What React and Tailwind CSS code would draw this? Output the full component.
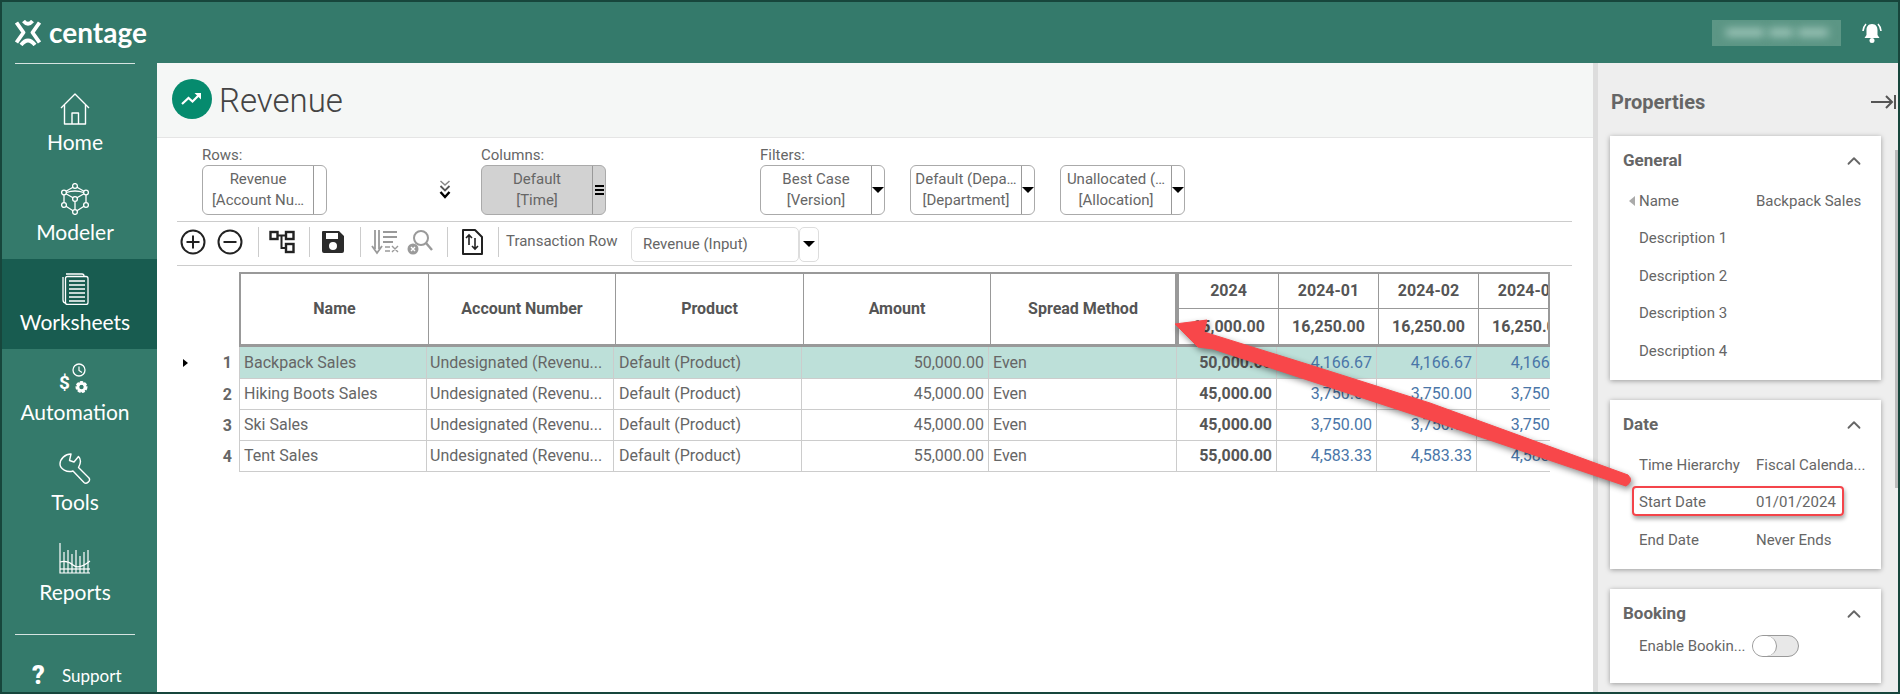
import { ChevronUp } from 'lucide-react';

const navItems = [
    { label: 'Home', icon: <HomeIcon /> },
    { label: 'Modeler', icon: <ModelerIcon /> },
    { label: 'Worksheets', icon: <WorksheetIcon />, active: true },
    { label: 'Automation', icon: <AutomationIcon /> },
    { label: 'Tools', icon: <ToolsIcon /> },
    { label: 'Reports', icon: <ReportsIcon /> },
];

const rows = [
    { name: 'Backpack Sales', amount: '50,000.00', month: '4,166.67' },
    { name: 'Hiking Boots Sales', amount: '45,000.00', month: '3,750.00' },
    { name: 'Ski Sales', amount: '45,000.00', month: '3,750.00' },
    { name: 'Tent Sales', amount: '55,000.00', month: '4,583.33' },
];

function LogoIcon() {
    return (
        <svg width="26" height="26" viewBox="0 0 26 26" fill="none" stroke="white" strokeWidth="3.8">
            <path d="M1.5 2.5 L8.5 12.5 L1.5 22.5" strokeLinejoin="round" />
            <path d="M24.5 2.5 L17.5 12.5 L24.5 22.5" strokeLinejoin="round" />
            <path d="M8.5 1 Q13 6.5 17.5 1" />
            <path d="M6 25 Q13 16 20 25" />
        </svg>
    );
}

function HomeIcon() {
    return (
        <svg width="30" height="32" viewBox="0 0 30 32" fill="none" stroke="white" strokeWidth="1.4" strokeLinejoin="round">
            <path d="M1 15 L15 1 L29 15" />
            <path d="M4.5 12 V31 H25.5 V12" />
            <path d="M12 31 V20 H18.5 V31" />
        </svg>
    );
}

function ModelerIcon() {
    return (
        <svg width="30" height="32" viewBox="0 0 30 32" fill="none" stroke="white" strokeWidth="1.3">
            <circle cx="15" cy="3" r="2.4" />
            <circle cx="4" cy="9.5" r="2.4" />
            <circle cx="26" cy="9.5" r="2.4" />
            <circle cx="15" cy="16" r="2.4" />
            <circle cx="4" cy="22" r="2.4" />
            <circle cx="26" cy="22" r="2.4" />
            <circle cx="15" cy="29" r="2.4" />
            <path d="M13 4.2 L6 8.3 M17 4.2 L24 8.3 M4 12 V19.5 M26 12 V19.5 M6 23.3 L13 27.8 M24 23.3 L17 27.8 M15 18.4 V26.6 M6 10.8 L13 14.7 M24 10.8 L17 14.7 M6.4 9.5 Q15 6.5 23.6 9.5" />
        </svg>
    );
}

function WorksheetIcon() {
    return (
        <svg width="28" height="32" viewBox="0 0 28 32" fill="none" stroke="white" strokeWidth="1.3">
            <path d="M5 1 H21 Q23 1 23 3" />
            <path d="M2 4 V27 Q2 30 5 30" />
            <rect x="4.5" y="3.5" width="22.5" height="28" rx="2" />
            <path d="M8 8 H24 M8 12 H24 M8 16 H24 M8 20 H24 M8 24 H24 M8 28 H24" />
        </svg>
    );
}

function AutomationIcon() {
    return (
        <svg width="32" height="32" viewBox="0 0 32 32" fill="none" stroke="white">
            <circle cx="20" cy="7" r="6" strokeWidth="1.3" />
            <path d="M20 3.5 V7.5 L23 9.5" strokeWidth="1.2" />
            <text x="0" y="26" fill="white" stroke="none" fontSize="19" fontWeight="700" fontFamily="Roboto, sans-serif">$</text>
            <circle cx="22.5" cy="24" r="4.2" strokeWidth="3.6" strokeDasharray="2.6 1" />
            <circle cx="22.5" cy="24" r="3.6" strokeWidth="2.6" />
        </svg>
    );
}

function ToolsIcon() {
    return (
        <svg width="32" height="32" viewBox="0 0 32 32" fill="none" stroke="white" strokeWidth="1.4" strokeLinejoin="round">
            <path d="M12 1 C6 1 1 6 1 11 C1 16 8 20 14 18 L25 29.5 C27.5 31.5 32 28 30 25 L19.5 14.5 C22 10 22 6 19.5 3.5 L15 9 L10.5 7.5 Z" />
        </svg>
    );
}

function ReportsIcon() {
    return (
        <svg width="32" height="32" viewBox="0 0 32 32" fill="none" stroke="white" strokeWidth="1.2">
            <path d="M1 0 V30 H31" />
            <path d="M5 9 V30 M9 7 V30 M13 11 V30 M17 7 V30 M21 13 V30 M25 9 V30 M29 7 V30" />
            <path d="M1 19 Q8 17 14 22 T31 18" />
            <path d="M1 26 H31" />
        </svg>
    );
}

function NavItem({ label, icon, active }) {
    return (
        <div className={`h-[90px] flex flex-col items-center pt-[14px] pr-[9px] ${active ? 'bg-[#185c50]' : ''}`}>
            <div className="h-[32px] flex items-center justify-center">{icon}</div>
            <div className="mt-[2px] text-[21px] leading-[30px] text-white font-['Lato',sans-serif]">{label}</div>
        </div>
    );
}

function Sidebar() {
    return (
        <aside className="w-[155px] shrink-0 flex flex-col">
            <div className="mx-[13px] mr-[22px] border-t border-white/80 h-[16px]"></div>
            {navItems.map((item) => (
                <NavItem key={item.label} {...item} />
            ))}
            <div className="mx-[13px] mr-[22px] mt-[15px] border-t border-white/80"></div>
            <div className="flex items-center mt-[28px] pl-[30px]">
                <span className="text-[25px] leading-[24px] font-black text-white w-[30px] font-['Roboto',sans-serif]">?</span>
                <span className="text-[17px] text-white font-['Lato',sans-serif]">Support</span>
            </div>
        </aside>
    );
}

function Caret({ className = '' }) {
    return <span className={`block w-0 h-0 border-x-[6px] border-x-transparent border-t-[6px] border-t-black ${className}`}></span>;
}

function FieldChip({ top, bottom, active, menu, className = '' }) {
    return (
        <div className={`w-[125px] h-[50px] flex rounded-[6px] border border-[#aaa] text-[15px] leading-[21px] text-[#666] ${active ? 'bg-[#d2d2d2]' : 'bg-white'} ${className}`}>
            <div className="flex-1 min-w-0 text-center pt-[3px] whitespace-nowrap overflow-hidden">
                <div>{top}</div>
                <div>{bottom}</div>
            </div>
            <div className="w-[13px] border-l border-[#999] flex items-center justify-center">
                {menu === 'lines' && (
                    <span className="flex flex-col gap-[2px]">
                        <span className="block w-[9px] h-[2px] bg-black"></span>
                        <span className="block w-[9px] h-[2px] bg-black"></span>
                        <span className="block w-[9px] h-[2px] bg-black"></span>
                    </span>
                )}
                {menu === 'caret' && <Caret />}
            </div>
        </div>
    );
}

function ToolSep() {
    return <div className="w-px h-[30px] bg-[#ccc]"></div>;
}

function Toolbar() {
    return (
        <div className="h-[44px] border-b border-[#ccc] flex items-center pl-[3px] pb-[4px]">
            <svg width="26" height="26" viewBox="0 0 26 26" fill="none" stroke="#222" strokeWidth="2">
                <circle cx="13" cy="13" r="11.5" />
                <path d="M6.5 13 H19.5 M13 6.5 V19.5" />
            </svg>
            <svg width="26" height="26" viewBox="0 0 26 26" fill="none" stroke="#222" strokeWidth="2" className="ml-[11px]">
                <circle cx="13" cy="13" r="11.5" />
                <path d="M6.5 13 H19.5" />
            </svg>
            <div className="ml-[15px]"><ToolSep /></div>
            <svg width="26" height="24" viewBox="0 0 26 24" fill="none" stroke="#222" strokeWidth="2.4" className="ml-[10px]">
                <rect x="1.5" y="2" width="7" height="7" />
                <rect x="17" y="2" width="7.5" height="7" />
                <rect x="17" y="14" width="7.5" height="8" />
                <path d="M8.5 5.5 H17 M12.5 5.5 V18 H17" strokeWidth="2" />
            </svg>
            <div className="ml-[14px]"><ToolSep /></div>
            <svg width="24" height="24" viewBox="0 0 24 24" className="ml-[11px]">
                <path fill="#2b2b2b" fillRule="evenodd" d="M2 1 H18 L23 6 V21 Q23 23 21 23 H3 Q1 23 1 21 V2 Q1 1 2 1 Z M5 3 V9 H17 V3 Z M12 12 A4 4 0 1 0 12 20 A4 4 0 1 0 12 12 Z" />
            </svg>
            <div className="ml-[15px]"><ToolSep /></div>
            <svg width="28" height="26" viewBox="0 0 28 26" fill="none" stroke="#9a9a9a" strokeWidth="1.8" className="ml-[10px]">
                <path d="M4 1 V20 M8 1 V20 M1 17 L6 24 L11 17" />
                <path d="M12 3 H26 M12 8 H26 M12 13 H22" strokeWidth="2" />
                <path d="M14 18 H19 M14 22 H19 M21 17 L27 23 M27 17 L21 23" strokeWidth="1.4" />
            </svg>
            <svg width="26" height="26" viewBox="0 0 26 26" fill="none" className="ml-[8px]">
                <circle cx="14" cy="9" r="7" stroke="#9a9a9a" strokeWidth="2" />
                <path d="M19 14 L25 21" stroke="#9a9a9a" strokeWidth="2.4" />
                <circle cx="6" cy="20" r="5.5" fill="#9a9a9a" />
                <path d="M4 18 L8 22 M8 18 L4 22" stroke="white" strokeWidth="1.4" />
            </svg>
            <div className="ml-[14px]"><ToolSep /></div>
            <svg width="22" height="26" viewBox="0 0 22 26" fill="none" className="ml-[13px]">
                <path d="M2 1 H14 L21 8 V25 H2 Z" stroke="#222" strokeWidth="2" strokeLinejoin="round" />
                <path d="M8 16 V6 M5 9 L8 6 L11 9 M14 9 V20 M11 17 L14 20 L17 17" stroke="#222" strokeWidth="1.6" />
            </svg>
            <div className="ml-[15px]"><ToolSep /></div>
            <span className="ml-[7px] w-[125px] text-[15px] text-[#666] whitespace-nowrap">Transaction Row</span>
            <div className="w-[168px] h-[35px] mt-[5px] flex items-center pl-[11px] rounded-[5px] border border-[#ddd] text-[15px] text-[#666]">Revenue (Input)</div>
            <div className="w-[20px] h-[35px] mt-[5px] flex items-center justify-center rounded-[5px] border border-[#ddd]">
                <Caret />
            </div>
        </div>
    );
}

function GridHeader() {
    const nameCols = [
        ['Name', 'w-[188px]'],
        ['Account Number', 'w-[187px]'],
        ['Product', 'w-[188px]'],
        ['Amount', 'w-[187px]'],
        ['Spread Method', 'flex-1'],
    ];
    const timeCols = [
        ['2024', '65,000.00'],
        ['2024-01', '16,250.00'],
        ['2024-02', '16,250.00'],
        ['2024-03', '16,250.00'],
    ];
    return (
        <div className="flex h-[75px] ml-[62px] text-[16px] font-bold text-[#555]">
            <div className="w-[938px] shrink-0 flex border-2 border-b-[3px] border-[#999]">
                {nameCols.map(([label, width], i) => (
                    <div key={label} className={`${width} flex items-center justify-center ${i < 4 ? 'border-r border-[#999]' : ''}`}>{label}</div>
                ))}
            </div>
            <div className="flex-1 min-w-0 flex overflow-hidden border-y-2 border-b-[3px] border-r-2 border-l-2 border-[#999]">
                {timeCols.map(([year, total]) => (
                    <div key={year} className="w-[100px] shrink-0 flex flex-col border-r border-[#999]">
                        <div className="h-[35px] flex items-center justify-center border-b border-[#999]">{year}</div>
                        <div className="flex-1 flex items-center justify-center whitespace-nowrap">{total}</div>
                    </div>
                ))}
            </div>
        </div>
    );
}

function GridRow({ row, index }) {
    const selected = index === 0;
    return (
        <div className={`flex items-stretch ${index === 0 ? 'h-[32px]' : 'h-[31px]'}`}>
            <div className="w-[62px] shrink-0 flex items-center pl-[6px] pr-[7px]">
                {selected && <span className="block w-0 h-0 border-y-[4px] border-y-transparent border-l-[5px] border-l-black"></span>}
                <span className="ml-auto text-[16px] font-bold text-[#666]">{index + 1}</span>
            </div>
            <div className={`flex-1 min-w-0 flex overflow-hidden border-b border-[#ccc] text-[16px] text-[#666] ${selected ? 'bg-[#bde0d9]' : ''}`}>
                <div className="w-[188px] shrink-0 pl-[4px] flex items-center border-x border-[#ccc]">{row.name}</div>
                <div className="w-[187px] shrink-0 pl-[3px] flex items-center border-r border-[#ccc] whitespace-nowrap">Undesignated (Revenu...</div>
                <div className="w-[188px] shrink-0 pl-[5px] flex items-center border-r border-[#ccc]">Default (Product)</div>
                <div className="w-[187px] shrink-0 pr-[4px] flex items-center justify-end border-r border-[#ccc]">{row.amount}</div>
                <div className="w-[188px] shrink-0 pl-[4px] flex items-center border-r border-[#ccc]">Even</div>
                <div className="w-[100px] shrink-0 pr-[4px] flex items-center justify-end border-r border-[#ccc] font-bold text-[#555]">{row.amount}</div>
                {[0, 1, 2].map((i) => (
                    <div key={i} className="w-[100px] shrink-0 pr-[4px] flex items-center justify-end border-r border-[#ccc] text-[#4a76a8]">{row.month}</div>
                ))}
            </div>
        </div>
    );
}

function PropRow({ label, value, marker }) {
    return (
        <div className="relative h-[37.5px] flex items-center pl-[29px] text-[15px] text-[#666]">
            {marker && <span className="absolute left-[19px] w-0 h-0 border-y-[5px] border-y-transparent border-r-[6px] border-r-[#aaa]"></span>}
            <span className="w-[117px] shrink-0 whitespace-nowrap">{label}</span>
            <span className="whitespace-nowrap">{value}</span>
        </div>
    );
}

function PropCard({ title, className = '', children }) {
    return (
        <section className={`bg-white shadow-[0_1px_5px_rgba(0,0,0,0.35)] ${className}`}>
            <div className="h-[46px] pt-[4px] pl-[13px] pr-[16px] flex items-center justify-between">
                <h3 className="text-[17px] font-bold text-[#666]">{title}</h3>
                <ChevronUp size={22} strokeWidth={2} color="#666" />
            </div>
            {children}
        </section>
    );
}

function PropertiesPanel() {
    return (
        <aside className="w-[300px] shrink-0 bg-[#eeeeee] relative flex flex-col pl-[12px] overflow-hidden">
            <div className="h-[73px] flex items-center justify-between pr-[2px]">
                <h2 className="ml-px mt-[5px] text-[20px] font-bold text-[#666]">Properties</h2>
                <svg width="26" height="14" viewBox="0 0 26 14" fill="none" stroke="#555" strokeWidth="2" className="mt-[5px]">
                    <path d="M1 7 H22 M16 1 L22 7 L16 13 M25 0 V14" />
                </svg>
            </div>
            <div className="w-[271px] flex flex-col gap-[20px]">
                <PropCard title="General" className="h-[244px]">
                    <PropRow label="Name" value="Backpack Sales" marker />
                    <PropRow label="Description 1" />
                    <PropRow label="Description 2" />
                    <PropRow label="Description 3" />
                    <PropRow label="Description 4" />
                </PropCard>
                <PropCard title="Date" className="h-[169px]">
                    <PropRow label="Time Hierarchy" value="Fiscal Calenda..." />
                    <PropRow label="Start Date" value="01/01/2024" />
                    <PropRow label="End Date" value="Never Ends" />
                </PropCard>
                <PropCard title="Booking" className="h-[94px]">
                    <div className="flex items-center pl-[29px] text-[15px] text-[#666]">
                        <span className="w-[113px] whitespace-nowrap">Enable Bookin...</span>
                        <span className="flex w-[47px] h-[22px] rounded-full border border-[#999] bg-[#e8e8e8]">
                            <span className="w-[24px] h-[20px] rounded-full border-r border-[#999] bg-white"></span>
                        </span>
                    </div>
                </PropCard>
            </div>
            {/* scrollbar */}
            <div className="absolute right-0 top-[87px] w-[3px] h-[338px] bg-[#bbb]"></div>
        </aside>
    );
}

function Annotation() {
    return (
        <>
            <svg width="1900" height="694" viewBox="0 0 1900 694" className="absolute left-[-2px] top-[-2px] pointer-events-none drop-shadow-[2px_3px_3px_rgba(0,0,0,0.45)]">
                <path d="M1175 324 L1207 320 L1204 332 L1310 365 L1430 403 L1628 475 Q1634 481 1626 486 L1430 420 L1277 370 L1213 349 L1198 347 Z" fill="#f8474a" stroke="#f8474a" strokeWidth="1" strokeLinejoin="round" />
            </svg>
            <div className="absolute left-[1630px] top-[484px] w-[212px] h-[30px] rounded-[4px] border-2 border-[#f4444a] shadow-[1px_3px_4px_rgba(0,0,0,0.35)]"></div>
        </>
    );
}

export default function App() {
    return (
        <div className="relative w-[1900px] h-[694px] overflow-hidden border-2 border-[#17463c] bg-[#347a6b] font-['Roboto',sans-serif] flex flex-col">
            <header className="h-[61px] shrink-0 flex items-center pl-[13px]">
                <LogoIcon />
                <span className="ml-[8px] text-[28px] leading-[31px] font-bold text-white font-['Lato',sans-serif]">centage</span>
                <div className="ml-auto flex items-center pr-[14px]">
                    {/* blurred account name */}
                    <div className="w-[129px] h-[26px] bg-[#5c9685] flex items-center justify-center gap-[5px] overflow-hidden mr-[19px]">
                        <span className="block w-[38px] h-[7px] bg-[#a7ccc0] blur-[4px]"></span>
                        <span className="block w-[24px] h-[7px] bg-[#a7ccc0] blur-[4px]"></span>
                        <span className="block w-[30px] h-[7px] bg-[#a7ccc0] blur-[4px]"></span>
                    </div>
                    <svg width="24" height="22" viewBox="0 0 24 22" fill="white">
                        <path d="M12 2 C8 2 6.5 5 6.5 8 V13 L4.5 16 H19.5 L17.5 13 V8 C17.5 5 16 2 12 2 Z" />
                        <circle cx="12" cy="18.5" r="2.5" />
                        <path d="M3 9 Q3.5 4.5 6 2 M21 9 Q20.5 4.5 18 2" fill="none" stroke="white" strokeWidth="1.6" />
                    </svg>
                </div>
            </header>
            <div className="flex-1 min-h-0 flex">
                <Sidebar />
                <main className="flex-1 min-w-0 bg-white flex flex-col">
                    <div className="h-[75px] shrink-0 bg-[#f5f7f6] border-b border-[#e5e5e5] flex items-center pl-[15px]">
                        <span className="w-[40px] h-[40px] rounded-full bg-[#068b6e] flex items-center justify-center mb-[2px]">
                            <svg width="22" height="16" viewBox="0 0 22 16" fill="none" stroke="white" strokeWidth="2.2">
                                <path d="M1 13 L7.5 7 L11.5 10.5 L19 3" />
                                <path d="M13.5 2 H20 V8.5" fill="white" stroke="none" />
                            </svg>
                        </span>
                        <h1 className="ml-[7px] text-[33px] leading-[40px] font-light text-[#444] mt-[2px]">Revenue</h1>
                    </div>
                    <div className="flex-1 min-h-0 pl-[20px] pr-[21px]">
                        <div className="h-[84px] border-b border-[#ccc] flex items-start pl-[25px] pt-[7px] text-[15px] text-[#666]">
                            <div className="w-[125px] shrink-0">
                                <div className="leading-[20px]">Rows:</div>
                                <FieldChip top="Revenue" bottom="[Account Nu…" />
                            </div>
                            <svg width="12" height="20" viewBox="0 0 12 20" fill="none" className="ml-[112px] mt-[35px] shrink-0">
                                <path d="M1.5 1 L6 5 L10.5 1" stroke="#888" strokeWidth="1.5" />
                                <path d="M1.5 6 L6 10.5 L10.5 6" stroke="#555" strokeWidth="1.8" />
                                <path d="M1.5 12 L6 17 L10.5 12" stroke="#000" strokeWidth="2.4" />
                            </svg>
                            <div className="w-[125px] shrink-0 ml-[30px]">
                                <div className="leading-[20px]">Columns:</div>
                                <FieldChip top="Default" bottom="[Time]" active menu="lines" />
                            </div>
                            <div className="w-[125px] shrink-0 ml-[154px]">
                                <div className="leading-[20px]">Filters:</div>
                                <FieldChip top="Best Case" bottom="[Version]" menu="caret" />
                            </div>
                            <FieldChip top="Default (Depa…" bottom="[Department]" menu="caret" className="ml-[25px] mt-[20px] shrink-0" />
                            <FieldChip top="Unallocated (…" bottom="[Allocation]" menu="caret" className="ml-[25px] mt-[20px] shrink-0" />
                        </div>
                        <Toolbar />
                        <div className="mt-[6px] w-[1373px]">
                            <GridHeader />
                            {rows.map((row, index) => (
                                <GridRow key={row.name} row={row} index={index} />
                            ))}
                        </div>
                    </div>
                </main>
                <div className="w-[5px] shrink-0 bg-[#dddddd]"></div>
                <PropertiesPanel />
            </div>
            <Annotation />
        </div>
    );
}
